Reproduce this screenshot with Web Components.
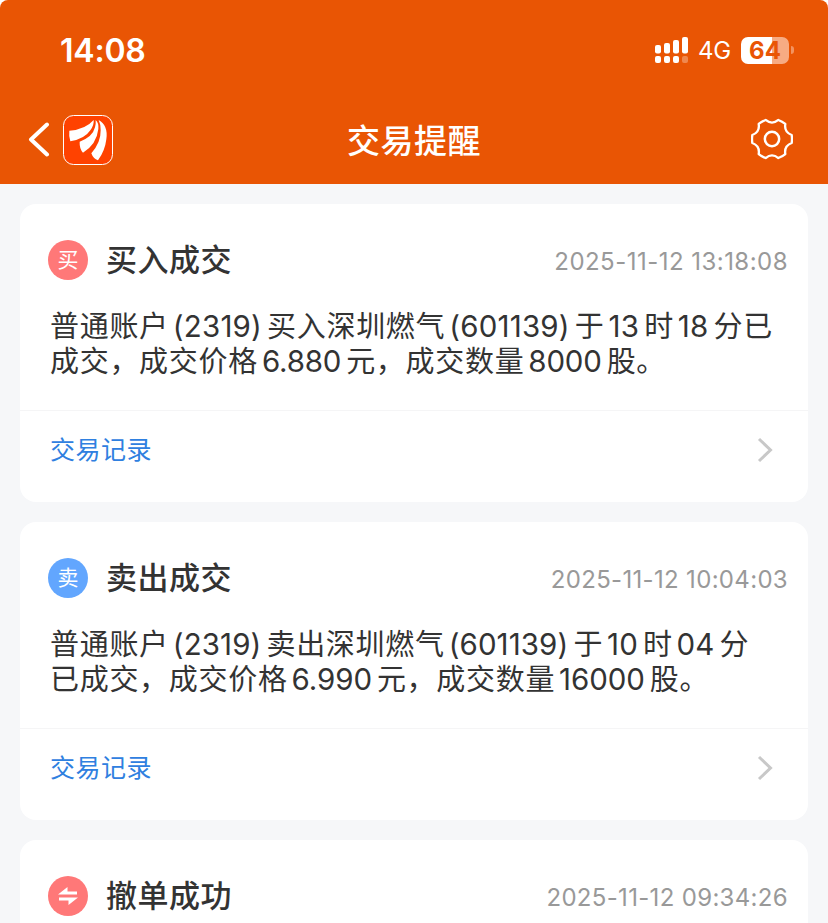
<!DOCTYPE html>
<html lang="zh-CN">
<head>
<meta charset="utf-8">
<title>交易提醒</title>
<style>
html{ background:#fff; }
body{
	margin:0;
	height:923px;
	overflow:hidden;
	background:#f6f7f9;
	color:#333;
	font-family:Inter,"Noto Sans CJK SC",sans-serif;
}
main{
	display:flex;
	flex-direction:column;
	gap:20px;
	padding:20px 20px 0;
}
</style>
</head>
<body>
<app-header>
	<status-bar slot="status" time="14:08" network="4G" battery="64"></status-bar>
	交易提醒
</app-header>
<main>
	<trade-card kind="buy" time="2025-11-12 13:18:08" style="--time-spacing:.47px">
		<span slot="title">买入成交</span>
		<trade-line>普通账户(2319)买入深圳燃气(601139)于13时18分已</trade-line>
		<trade-line style="--num-spacing:-.2px">成交，成交价格6.880元，成交数量8000股。</trade-line>
	</trade-card>
	<trade-card kind="sell" time="2025-11-12 10:04:03">
		<span slot="title">卖出成交</span>
		<trade-line style="--num-spacing:.1px">普通账户(2319)卖出深圳燃气(601139)于10时04分</trade-line>
		<trade-line style="--num-spacing:-.1px">已成交，成交价格6.990元，成交数量16000股。</trade-line>
	</trade-card>
	<trade-card kind="cancel" time="2025-11-12 09:34:26" head-only>
		<span slot="title">撤单成功</span>
	</trade-card>
</main>

<script>
//各要素共通：shadow root を開いて中身を流し込む
const attach = (el,html)=>{
	const root = el.attachShadow({mode:"open"});
	root.innerHTML = html;
	return root;
};

//--歯車の輪郭。山を60度ずつ回して6個つなぐ--
const gearPath = ()=>{
	const rot = (x,y,i)=>{
		const w = i*Math.PI/3, c = Math.cos(w), s = Math.sin(w);
		return `${(x*c-y*s).toFixed(1)},${(x*s+y*c).toFixed(1)}`;
	};
	let d = `M${rot(59,-12,0)}`;
	for(let i=0; i<6; ++i){
		d += `Q${rot(61,0,i)} ${rot(59,12,i)}`;
		d += `C${rot(43,18,i)} ${rot(37.1,28.2,i)} ${rot(59,-12,i+1)}`;
	}
	return d+"z";
};

//--最上段：時刻・電波・電池--
class StatusBar extends HTMLElement{
	constructor(){ super();
		const level = this.getAttribute("battery");
		attach(this,`
		<style>
		:host{ display:flex; align-items:center; height:100px; padding:0 34px 0 60px; color:#fff; }
		.time{ flex:1; font-size:32px; font-weight:600; letter-spacing:-.2px; }
		.bars{ width:34px; height:27px; margin-right:9px; }
		.net{ font-size:24px; letter-spacing:-.2px; margin-right:10px; }
		.battery{
			width:48px; height:27px; border-radius:7px;
			background:linear-gradient(90deg,#fff ${level}%,#f7ab83 ${level}%);
			color:#e95504; font-size:24px; font-weight:700; line-height:27px; text-align:center;
		}
		.cap{ width:3px; height:8px; margin-left:2px; border-radius:0 4px 4px 0; background:#f3935f; }
		</style>
		<span class="time">${this.getAttribute("time")}</span>
		<svg class="bars" viewBox="0 0 34 27" fill="#fff">
			<rect x="0" y="8" width="6" height="8.5" rx="2"/>
			<rect x="9" y="6" width="6" height="10.5" rx="2"/>
			<rect x="18" y="3" width="6" height="13.5" rx="2"/>
			<rect x="27" y="0" width="6" height="16.5" rx="2"/>
			<rect x="0" y="19" width="6" height="7" rx="2"/>
			<rect x="9" y="19" width="6" height="7" rx="2"/>
			<rect x="18" y="19" width="6" height="7" rx="2"/>
			<rect x="27" y="19" width="6" height="7" rx="2" opacity=".3"/>
		</svg>
		<span class="net">${this.getAttribute("network")}</span>
		<span class="battery">${level}</span>
		<span class="cap"></span>`);
	}
}

//--見出し：戻る・ロゴ・題名・設定--
class AppHeader extends HTMLElement{
	constructor(){ super();
		attach(this,`
		<style>
		:host{ display:block; height:184px; background:#e95504; border-radius:8px 8px 0 0; box-shadow:0 -8px 0 #fff; }
		nav{ display:grid; grid-template-columns:1fr auto 1fr; align-items:center; height:80px; padding:0 35px 0 28px; }
		.left{ display:flex; align-items:center; gap:13px; }
		svg{ display:block; }
		h1{ margin:0; padding:2px 0 0 7px; color:#fff; font-size:33px; font-weight:500; line-height:44px; letter-spacing:.5px; }
		.gear{ justify-self:end; margin-bottom:2px; }
		</style>
		<slot name="status"></slot>
		<nav>
			<div class="left">
				<svg width="22" height="36" viewBox="0 0 22 36" fill="none" stroke="#fff" stroke-width="4" stroke-linecap="round" stroke-linejoin="round"><path d="M19 2.5 3 17.5 19 32.5"/></svg>
				<svg width="50" height="50" viewBox="0 0 150 150">
					<rect x="1.5" y="1.5" width="147" height="147" rx="30" fill="#ff4200" stroke="#fff" stroke-width="3"/>
					<g fill="#fff">
						<path d="M19 47Q67 44 92 15Q94 29 82 46Q65 72 22 79Q17 65 19 47z"/>
						<path d="M98 15Q108 24 106 42Q101 88 60 113Q49 101 50 80Q89 66 96 37Q99 27 98 15z"/>
						<path d="M107 15Q136 31 130 73Q126 108 105 136Q91 132 85 115Q114 82 113 46Q113 27 107 15z"/>
					</g>
				</svg>
			</div>
			<h1><slot></slot></h1>
			<svg class="gear" width="42" height="42" viewBox="-63 -63 126 126" fill="none" stroke="#fff" stroke-linejoin="round">
				<path stroke-width="7" d="${gearPath()}"/>
				<circle r="21.5" stroke-width="7.5"/>
			</svg>
		</nav>`);
	}
}

//--本文1行。数字の塊だけ別の字間で組む--
class TradeLine extends HTMLElement{
	constructor(){ super();
		const runs = this.textContent.trim().replace(/[(\d.)]+/g, s=>`<span>${s}</span>`);
		attach(this,`
		<style>
		:host{ display:block; height:35px; line-height:35px; font-size:29px; letter-spacing:.7px; white-space:nowrap; }
		span{ margin:0 5px 0 4px; font-size:29.5px; letter-spacing:var(--num-spacing,.2px); }
		</style>${runs}`);
	}
}

//--通知カード--
class TradeCard extends HTMLElement{
	static get badges(){ return {
		buy:["#ff7878","买"],
		sell:["#62a6fe","卖"],
		cancel:["#ff7878",`<svg width="20" height="18" viewBox="0 0 20 18" fill="#fff"><path d="M0 7.5 9.5 0V4.5H19V7.5zM20 10.5 10.5 18V13.5H1V10.5z"/></svg>`],
	} }
	constructor(){ super();
		const [color,mark] = TradeCard.badges[this.getAttribute("kind")];
		//head-only のカードは本文とリンクを持たない
		const rest = this.hasAttribute("head-only") ? "" : `
		<div class="text"><slot></slot></div>
		<footer>
			<span>交易记录</span>
			<svg width="16" height="26" viewBox="0 0 16 26" fill="none" stroke="#c8c8c8" stroke-width="3"><path d="M2 2 13.5 13 2 24"/></svg>
		</footer>`;
		attach(this,`
		<style>
		:host{ display:block; flex:none; height:298px; border-radius:16px; background:#fff; }
		:host([head-only]){ height:83px; border-radius:16px 16px 0 0; }
		header{ display:flex; align-items:center; height:40px; padding:36px 20px 0 28px; }
		.badge{
			display:flex; align-items:center; justify-content:center;
			width:40px; height:40px; margin-right:18px; border-radius:50%;
			background:${color}; color:#fff; font-size:21px; line-height:38px;
		}
		h2{ flex:1; margin:0; font-size:31px; font-weight:500; line-height:40px; letter-spacing:.5px; }
		time{ padding-top:2px; color:#999; font-size:24px; letter-spacing:var(--time-spacing,.32px); }
		.text{ height:101px; padding:29px 0 0 30px; }
		footer{
			display:flex; align-items:center; justify-content:space-between;
			height:78px; padding:0 35px 0 30px; border-top:1px solid #f5f5f6;
			color:#2f80e0; font-size:25px; letter-spacing:.5px;
		}
		footer span{ padding-bottom:4px; }
		</style>
		<header>
			<span class="badge">${mark}</span>
			<h2><slot name="title"></slot></h2>
			<time>${this.getAttribute("time")}</time>
		</header>${rest}`);
	}
}

customElements.define("status-bar",StatusBar);
customElements.define("app-header",AppHeader);
customElements.define("trade-line",TradeLine);
customElements.define("trade-card",TradeCard);
</script>
</body>
</html>
